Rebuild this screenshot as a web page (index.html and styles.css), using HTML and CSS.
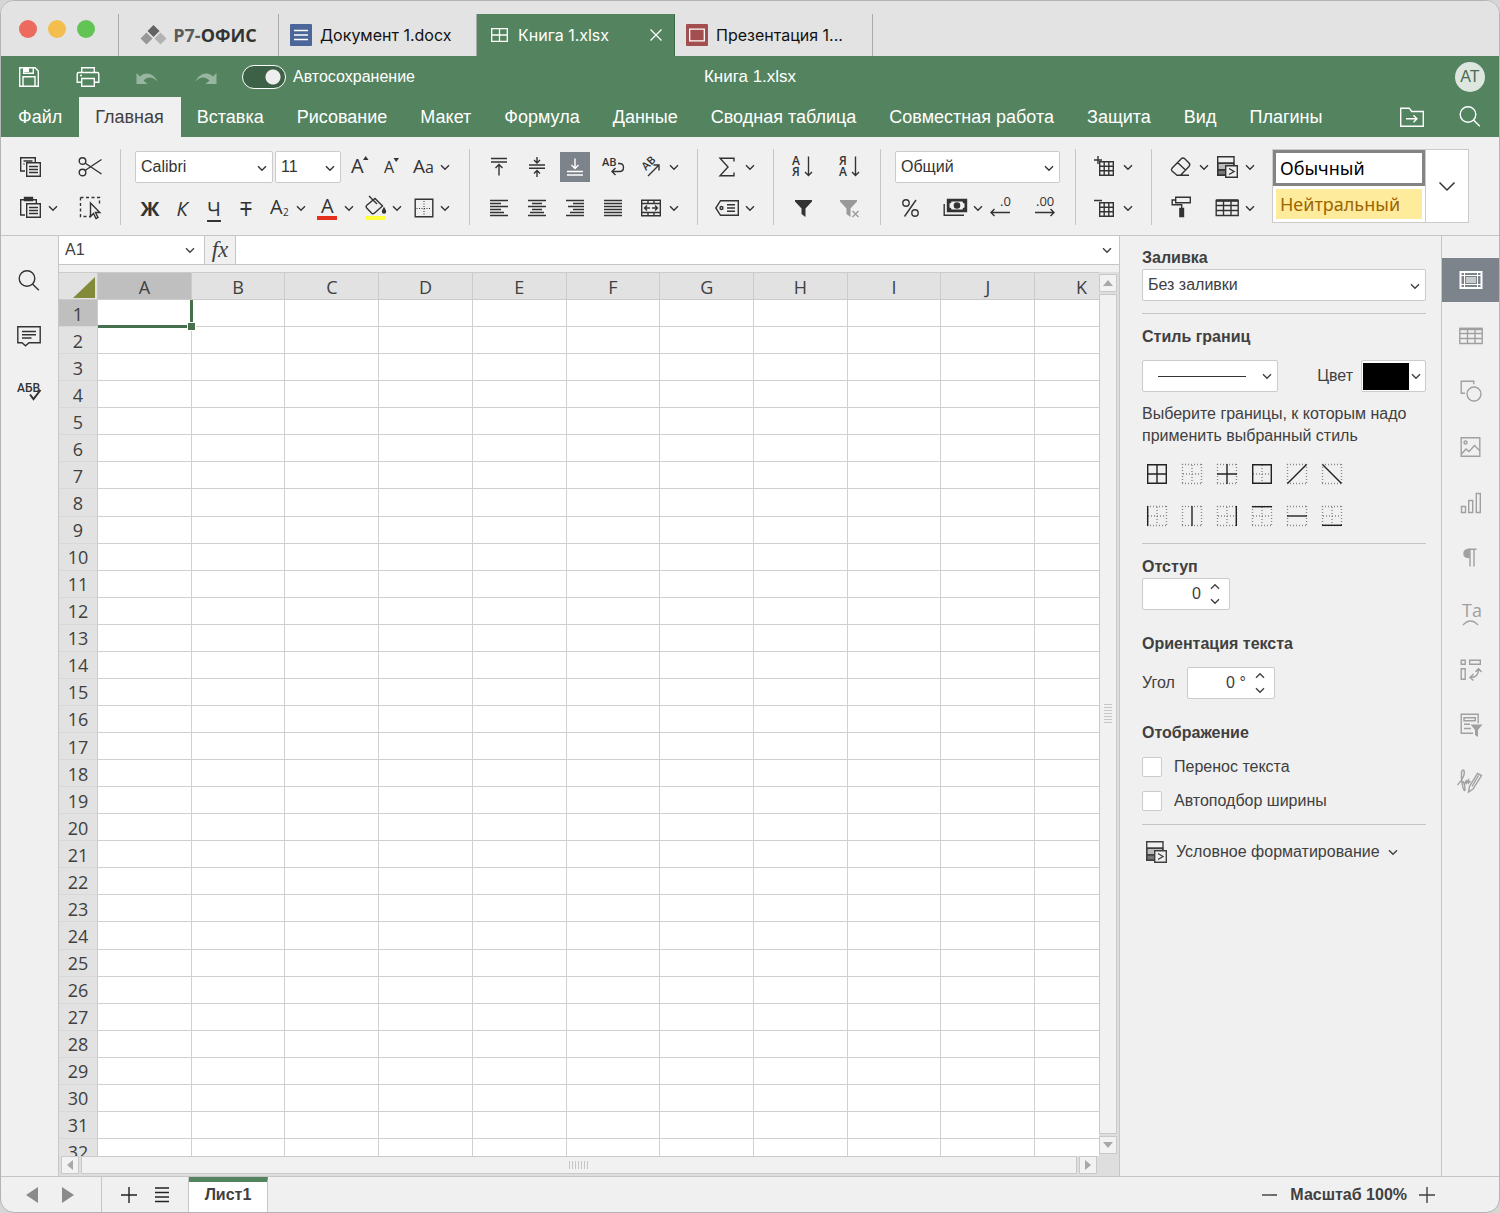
FILE: index.html
```html
<!DOCTYPE html>
<html lang="ru">
<head>
  <meta charset="utf-8">
  <title>Книга 1.xlsx</title>
  <link rel="stylesheet" href="styles.css">
</head>
<body>

<!-- общие иконки -->
<svg class="sprite" aria-hidden="true">
  <symbol id="caret" viewBox="0 0 10 10"><path d="M1 3.2 5 7.2l4-4" fill="none" stroke="currentColor" stroke-width="1.4"/></symbol>
  <symbol id="caret-up" viewBox="0 0 10 10"><path d="M1 6.8 5 2.8l4 4" fill="none" stroke="currentColor" stroke-width="1.4"/></symbol>
  <symbol id="dots" viewBox="0 0 24 24"><path d="M2.5 2v20M21.5 2v20M2 2.5h20M2 21.5h20" fill="none" stroke="#888" stroke-dasharray="1 2"/></symbol>
  <symbol id="dots-cross" viewBox="0 0 24 24"><path d="M12 3v18M3 12h18" fill="none" stroke="#888" stroke-dasharray="1 2"/></symbol>
  <symbol id="cells" viewBox="0 0 24 24"><path d="M6.7 6.7h13.6v13.6H6.7zM11.2 6.7v13.6M15.8 6.7v13.6M6.7 11.2h13.6M6.7 15.8h13.6" fill="none" stroke="currentColor" stroke-width="1.4"/></symbol>
  <symbol id="search" viewBox="0 0 24 24"><circle cx="10" cy="9.500" r="7.800" fill="none" stroke="currentColor" stroke-width="1.4"/><path d="m15.500 15 6.300 6.300" fill="none" stroke="currentColor" stroke-width="1.4"/></symbol>
  <symbol id="cond" viewBox="0 0 24 24"><path d="M2.7 8.300h16v6.500h-16z" fill="#bbb"/><path d="M2.7 14.700h8v5.600h-8z" fill="#777"/><path d="M2.7 1.700H19v18.600H2.700zM2.700 8.300H19M2.700 14.700H12" fill="none" stroke="currentColor" stroke-width="1.4"/><path d="M10.700 10.700h11.600v11.600H10.700z" fill="#f0f0f0" stroke="currentColor" stroke-width="1.4"/><path d="m14 13.500 5 3-5 3" fill="none" stroke="currentColor" stroke-width="1.4"/></symbol>
</svg>

<div class="window">

  <header class="titlebar">
    <div class="lights">
      <span class="light red"></span>
      <span class="light yellow"></span>
      <span class="light green"></span>
    </div>
    <nav class="tabs">
      <a class="tab home" href="#">
        <svg width="27" height="20" viewBox="0 0 27 20"><path d="m13.500 0 6 6-6 6-6-6z" fill="#636363"/><path d="m6.500 7.500 6 6-6 6-6-6z" fill="#979797"/><path d="m20.500 7.500 6 6-6 6-6-6z" fill="#b3b3b3"/></svg>
        <span class="logo"><span>Р7-</span>ОФИС</span>
      </a>
      <a class="tab" href="#">
        <svg width="22" height="22" viewBox="0 0 22 22"><rect width="22" height="22" rx="1" fill="#4b6698"/><path d="M4 6.500h14M4 11h14M4 15.500h14" stroke="#fff" stroke-width="1.5"/></svg>
        <span>Документ 1.docx</span>
      </a>
      <a class="tab active" href="#">
        <svg width="22" height="22" viewBox="0 0 22 22"><path d="M3.700 4.700h15.600v12.600H3.700zM11.500 5v12M4 11h15" fill="none" stroke="#fff" stroke-width="1.3"/></svg>
        <span>Книга 1.xlsx</span>
        <svg class="close" width="14" height="14" viewBox="0 0 14 14"><path d="m1.500 1.500 11 11M12.500 1.500l-11 11" stroke="#fff" stroke-width="1.3"/></svg>
      </a>
      <a class="tab" href="#">
        <svg width="22" height="22" viewBox="0 0 22 22"><rect width="22" height="22" rx="1" fill="#a34f4f"/><path d="M3.700 5.200h14.600v11.600H3.700z" fill="none" stroke="#fff" stroke-width="1.3"/></svg>
        <span>Презентация 1...</span>
      </a>
    </nav>
  </header>

  <div class="header">
    <div class="quick">
      <button class="btn" aria-label="Сохранить"><svg class="icon" viewBox="0 0 24 24"><path d="M2.700 2.700h15.300l3.300 3.300v15.300H2.700z"/><path d="M6 21v-9.300h12V21"/><path d="M6.700 3v5.300h9.600V3"/><path d="M7 3h5v4h-5z" fill="currentColor" stroke="none"/></svg></button>
      <button class="btn" aria-label="Печать"><svg class="icon" viewBox="0 0 24 24"><path d="M5.700 7.500V2.700h12.600v4.800M5.500 17.300H1.200V9q0-1.500 1.500-1.500h18.600q1.500 0 1.500 1.500v8.300h-4.300"/><path d="M5.700 13.500h12.600v7.800H5.700z"/><path d="M4 10.500h2"/></svg></button>
      <button class="btn off" aria-label="Отменить"><svg class="icon" viewBox="0 0 24 24"><path d="M1.500 8v11h11l-4-3.500c4-4 9-4.500 14 1C19.500 9 10.500 5.500 5 11.500z" fill="currentColor" stroke="none"/></svg></button>
      <button class="btn off" aria-label="Повторить"><svg class="icon" viewBox="0 0 24 24"><path d="M22.500 8v11h-11l4-3.500c-4-4-9-4.500-14 1C4.500 9 13.500 5.500 19 11.500z" fill="currentColor" stroke="none"/></svg></button>
      <label class="autosave"><input type="checkbox" class="switch" checked> Автосохранение</label>
    </div>
    <div class="doc-name">Книга 1.xlsx</div>
    <button class="avatar">AT</button>
  </div>

  <nav class="menu">
    <a href="#">Файл</a>
    <a href="#" class="active">Главная</a>
    <a href="#">Вставка</a>
    <a href="#">Рисование</a>
    <a href="#">Макет</a>
    <a href="#">Формула</a>
    <a href="#">Данные</a>
    <a href="#">Сводная таблица</a>
    <a href="#">Совместная работа</a>
    <a href="#">Защита</a>
    <a href="#">Вид</a>
    <a href="#">Плагины</a>
    <div class="menu-tools">
      <button class="btn" aria-label="Открыть расположение"><svg class="icon" viewBox="0 0 24 24"><path d="M.7 21.300V3.200h8.500l2.500 3.300h11.600v14.800z"/><path d="M6 13.800h11M13.500 10.300l3.500 3.500-3.500 3.500"/></svg></button>
      <button class="btn" aria-label="Поиск"><svg class="icon"><use href="#search"/></svg></button>
    </div>
  </nav>

  <div class="toolbar">
    <div class="group">
      <div class="line spread clip">
        <button class="btn" aria-label="Копировать"><svg class="icon" viewBox="0 0 24 24"><path d="M7 16H2.700V2.700h14.600V7M5.500 6h9M5.500 9h1"/><path d="M8.700 7.700h13.600v13.600H8.700zM11 11.500h9M11 14.500h9M11 17.500h9"/></svg></button>
        <button class="btn" aria-label="Вырезать"><svg class="icon" viewBox="0 0 24 24"><circle cx="4.500" cy="6" r="3.300"/><circle cx="4.500" cy="17.500" r="3.300"/><path d="M7 8 23.500 19M7 15.500 23.500 4.500"/></svg></button>
      </div>
      <div class="line spread clip">
        <button class="btn split" aria-label="Вставить"><svg class="icon" viewBox="0 0 24 24"><path d="M7 19H2.700V3.700H6M15 3.700h3.300V7"/><path d="M6.500 1.500h8v3h-8z" fill="currentColor"/><path d="M8.700 7.700h13.600v13.600H8.700zM11 11.500h9M11 14.500h9M11 17.500h9"/></svg><svg class="caret"><use href="#caret"/></svg></button>
        <button class="btn" aria-label="Выделить"><svg class="icon" viewBox="0 0 24 24"><path d="M2.500 1.500h19v7M2.500 1.500v19h10" stroke-dasharray="3 2.500"/><path d="M12.500 7v13.500l3-3 2.500 5 2-1-2.500-5h4.300z" fill="#f0f0f0"/></svg></button>
      </div>
    </div>

    <div class="group font">
      <div class="line tight">
        <span class="combo font-name"><select aria-label="Шрифт"><option>Calibri</option></select><svg class="caret"><use href="#caret"/></svg></span>
        <span class="combo font-size"><select aria-label="Размер шрифта"><option>11</option></select><svg class="caret"><use href="#caret"/></svg></span>
        <button class="btn" aria-label="Увеличить размер"><svg class="icon" viewBox="0 0 24 24"><text x="5" y="18" font-size="20">A</text><path d="m17 5 2.700-4L22.500 5z" fill="currentColor" stroke="none"/></svg></button>
        <button class="btn" aria-label="Уменьшить размер"><svg class="icon" viewBox="0 0 24 24"><text x="6" y="18" font-size="16">A</text><path d="m15.500 3 2.700 4L21 3z" fill="currentColor" stroke="none"/></svg></button>
        <button class="btn split" aria-label="Изменить регистр"><svg class="icon" viewBox="0 0 24 24"><text x="3" y="18" font-size="19">A</text><text x="15" y="18" font-size="16">a</text></svg><svg class="caret"><use href="#caret"/></svg></button>
      </div>
      <div class="line tight">
        <button class="btn letter bold">Ж</button>
        <button class="btn letter italic">К</button>
        <button class="btn letter under">Ч</button>
        <button class="btn letter strike">Т</button>
        <button class="btn split" aria-label="Подстрочные знаки"><svg class="icon" viewBox="0 0 24 24"><text x="4" y="18" font-size="20">A</text><text x="17" y="20" font-size="10">2</text></svg><svg class="caret"><use href="#caret"/></svg></button>
        <button class="btn split" aria-label="Цвет шрифта"><svg class="icon" viewBox="0 0 24 24"><text x="7" y="17" font-size="20">A</text><path d="M3 20h20v4H3z" fill="#e6301e" stroke="none"/></svg><svg class="caret"><use href="#caret"/></svg></button>
        <button class="btn split" aria-label="Цвет заливки"><svg class="icon" viewBox="0 0 24 24"><path d="m4.500 9.500 8.500-7 7.500 7.500-8.500 7.500q-1.200.8-2.300-.3l-5-5.300q-1.200-1.200-.2-2.400zM7 0l8 8"/><path d="M22 12q3 5 0 5t0-5z" fill="currentColor"/><path d="M3 20h20v4H3z" fill="#ffff3c" stroke="none"/></svg><svg class="caret"><use href="#caret"/></svg></button>
        <button class="btn split" aria-label="Границы"><svg class="icon" viewBox="0 0 24 24"><path d="M5.200 3.200h17.600v17.600H5.200z"/><path d="M14 5v15M6.500 12.500h15" stroke-width="1" stroke-dasharray="1 1.500"/></svg><svg class="caret"><use href="#caret"/></svg></button>
      </div>
    </div>

    <div class="group">
      <div class="line wide">
        <button class="btn" aria-label="По верхнему краю"><svg class="icon" viewBox="0 0 24 24"><path d="M4 3.500h16M4 7h16M12 20.500V9.500M8.500 13 12 9.500l3.500 3.500"/></svg></button>
        <button class="btn" aria-label="По середине"><svg class="icon" viewBox="0 0 24 24"><path d="M4 10h16M4 13.300h16M12 2v6M9 5l3 3 3-3M12 22v-6.500M9 18.500l3-3 3 3"/></svg></button>
        <button class="btn pressed" aria-label="По нижнему краю"><svg class="icon" viewBox="0 0 24 24"><path d="M4 16.500h16M4 20h16M12 3.500v10M8.500 10 12 13.500l3.500-3.500"/></svg></button>
        <button class="btn" aria-label="Перенос текста"><svg class="icon" viewBox="0 0 24 24"><text x="1" y="11" font-size="11" font-weight="600">AB</text><path d="M17 8.500h1.500q4 0 4 4t-4 4h-7M14.500 13l-3.500 3.500 3.500 3.500"/></svg></button>
        <button class="btn split" aria-label="Ориентация"><svg class="icon" viewBox="0 0 24 24"><text x="0" y="0" font-size="11" font-weight="600" transform="translate(7 16) rotate(-45)">AB</text><path d="m9 21 11-11M14.500 10H20v5.500"/></svg><svg class="caret"><use href="#caret"/></svg></button>
      </div>
      <div class="line wide">
        <button class="btn" aria-label="По левому краю"><svg class="icon" viewBox="0 0 24 24"><path d="M3 4.500h18M3 7.500h11M3 10.500h18M3 13.500h11M3 16.500h14M3 19.500h18"/></svg></button>
        <button class="btn" aria-label="По центру"><svg class="icon" viewBox="0 0 24 24"><path d="M3 4.500h18M7 7.500h10M3 10.500h18M7 13.500h10M5 16.500h14M3 19.500h18"/></svg></button>
        <button class="btn" aria-label="По правому краю"><svg class="icon" viewBox="0 0 24 24"><path d="M3 4.500h18M10 7.500h11M5 10.500h16M10 13.500h11M7 16.500h14M3 19.500h18"/></svg></button>
        <button class="btn" aria-label="По ширине"><svg class="icon" viewBox="0 0 24 24"><path d="M3 4.500h18M3 7.500h18M3 10.500h18M3 13.500h18M3 16.500h18M3 19.500h18"/></svg></button>
        <button class="btn split" aria-label="Объединить"><svg class="icon" viewBox="0 0 24 24"><path d="M2.700 4.200h18.600v15.600H2.700zM2.700 7.500h18.600M2.700 16.500h18.600M9 4v3.500M15 4v3.500M9 16.500V20M15 16.500V20M5.500 12H11M8 9.500 5.500 12 8 14.500M18.500 12H13M16 9.500l2.500 2.500-2.500 2.500"/></svg><svg class="caret"><use href="#caret"/></svg></button>
      </div>
    </div>

    <div class="group">
      <div class="line">
        <button class="btn split" aria-label="Сумма"><svg class="icon" viewBox="0 0 24 24"><path d="M19 6.500V3.200H5l8 8.800-8 8.800h14v-3.300"/></svg><svg class="caret"><use href="#caret"/></svg></button>
      </div>
      <div class="line">
        <button class="btn split" aria-label="Именованные диапазоны"><svg class="icon" viewBox="0 0 24 24"><path d="M5.500 4.700h17.800v14.600H5.500L.8 12z"/><circle cx="6.500" cy="12" r="1.500"/><path d="M12 8.700h8M12 12h8M12 15.300h8"/></svg><svg class="caret"><use href="#caret"/></svg></button>
      </div>
    </div>

    <div class="group">
      <div class="line sort">
        <button class="btn" aria-label="По возрастанию"><svg class="icon" viewBox="0 0 24 24"><text x="1" y="10" font-size="12" font-weight="600">А</text><text x="1" y="21" font-size="12" font-weight="600">Я</text><path d="M17.500 1.500v19M14 17l3.500 3.500L21 17"/></svg></button>
        <button class="btn" aria-label="По убыванию"><svg class="icon" viewBox="0 0 24 24"><text x="1" y="10" font-size="12" font-weight="600">Я</text><text x="1" y="21" font-size="12" font-weight="600">А</text><path d="M17.500 1.500v19M14 17l3.500 3.500L21 17"/></svg></button>
      </div>
      <div class="line sort">
        <button class="btn" aria-label="Фильтр"><svg class="icon" viewBox="0 0 24 24"><path d="M4 4h17v1.500l-6.500 7V21l-4-3v-5.500L4 5.500z" fill="currentColor" stroke="none"/></svg></button>
        <button class="btn faded" aria-label="Очистить фильтр"><svg class="icon" viewBox="0 0 24 24"><path d="M2 4h17v1.500l-6.500 7V21l-4-3v-5.500L2 5.500z" fill="currentColor" stroke="none"/><path d="m14.500 15 6 6M20.500 15l-6 6"/></svg></button>
      </div>
    </div>

    <div class="group">
      <div class="line">
        <span class="combo format"><select aria-label="Числовой формат"><option>Общий</option></select><svg class="caret"><use href="#caret"/></svg></span>
      </div>
      <div class="line spread">
        <button class="btn" aria-label="Процент"><svg class="icon" viewBox="0 0 24 24"><circle cx="8" cy="7" r="3.200"/><circle cx="17" cy="17" r="3.200"/><path d="M18 4 6.500 20.500"/></svg></button>
        <span class="pair">
          <button class="btn split" aria-label="Денежный формат"><svg class="icon" viewBox="0 0 24 24"><path d="M4.500 3.500h19v12h-19z" fill="currentColor"/><path d="M8.500 5.500h11q0 2 2 2v4q-2 0-2 2h-11q0-2-2-2v-4q2 0 2-2z" fill="#f0f0f0" stroke="none"/><circle cx="14" cy="9.500" r="2.600" fill="currentColor"/><path d="M1.200 8v11.300H21"/></svg><svg class="caret"><use href="#caret"/></svg></button>
          <button class="btn" aria-label="Уменьшить разрядность"><svg class="icon" viewBox="0 0 24 24"><text x="11" y="10" font-size="13">.0</text><path d="M21 16.500H2M5.500 13 2 16.500 5.500 20"/></svg></button>
        </span>
        <button class="btn" aria-label="Увеличить разрядность"><svg class="icon" viewBox="0 0 24 24"><text x="3" y="10" font-size="13">.00</text><path d="M2 16.500h19M17.500 13l3.500 3.500-3.500 3.500"/></svg></button>
      </div>
    </div>

    <div class="group">
      <div class="line">
        <button class="btn split" aria-label="Вставить ячейки"><svg class="icon" viewBox="0 0 24 24"><use href="#cells"/><path d="M5 1v8M1 5h8"/></svg><svg class="caret"><use href="#caret"/></svg></button>
      </div>
      <div class="line">
        <button class="btn split" aria-label="Удалить ячейки"><svg class="icon" viewBox="0 0 24 24"><use href="#cells"/><path d="M1 4.500h8"/></svg><svg class="caret"><use href="#caret"/></svg></button>
      </div>
    </div>

    <div class="group last">
      <div class="line">
        <button class="btn split" aria-label="Очистить"><svg class="icon" viewBox="0 0 24 24"><path d="M8 20.300 3 16q-1.200-1.300 0-2.700L12 4q2-1.800 4 0l4 4q1.500 1.800 0 3.500l-8.500 8.800H8zM8.500 7.500l8.500 8M11 20.300h9"/></svg><svg class="caret"><use href="#caret"/></svg></button>
        <button class="btn split" aria-label="Условное форматирование"><svg class="icon"><use href="#cond"/></svg><svg class="caret"><use href="#caret"/></svg></button>
      </div>
      <div class="line">
        <button class="btn split" aria-label="Формат по образцу"><svg class="icon" viewBox="0 0 24 24"><path d="M6.700 1.200h14.600v5.600H6.700zM6.500 4H3.200v4.700h9.500V12"/><path d="M10.900 12.500h3.600v8h-3.600z" fill="currentColor"/></svg></button>
        <button class="btn split" aria-label="Форматировать как таблицу"><svg class="icon" viewBox="0 0 24 24"><path d="M1.200 4.500h22v15h-22zM1.200 9.500h22M1.200 14.500h22M8.500 5v14.500M16 5v14.500"/><path d="M1.200 4.500h22" stroke-width="2.5"/></svg><svg class="caret"><use href="#caret"/></svg></button>
      </div>
    </div>

    <div class="styles">
      <div class="style-list">
        <button class="style normal">Обычный</button>
        <button class="style neutral">Нейтральный</button>
      </div>
      <button class="style-more" aria-label="Ещё стили"><svg width="18" height="18" viewBox="0 0 18 18"><path d="m1.500 5.500 7.500 7.500 7.500-7.500" fill="none" stroke="currentColor" stroke-width="1.5"/></svg></button>
    </div>
  </div>

  <main class="main">
    <aside class="left">
      <button class="btn" aria-label="Найти"><svg class="icon"><use href="#search"/></svg></button>
      <button class="btn" aria-label="Комментарии"><svg class="icon" viewBox="0 0 24 24"><path d="M.8 2.700h22.400v16.100H12l-3.500 3-3.500-3H.8z"/><path d="M5 7.500h14M5 10.700h14M5 14h9.500"/></svg></button>
      <button class="btn" aria-label="Проверка орфографии"><svg class="icon" viewBox="0 0 24 24"><text class="spell" x="0" y="13" font-size="12">АБВ</text><path d="m13 15.500 3.500 4.500 7-9" stroke-width="2"/></svg></button>
    </aside>

    <section class="editor">
      <div class="formula">
        <span class="cell-name"><input type="text" value="A1" aria-label="Имя ячейки"><svg class="caret"><use href="#caret"/></svg></span>
        <button class="fx">fx</button>
        <span class="cell-value"><input type="text" aria-label="Строка формул"><svg class="caret"><use href="#caret"/></svg></span>
      </div>
      <div class="sheet">
        <div class="sheet-view">
          <table class="grid">
            <thead>
              <tr><th class="corner"><svg width="22" height="21" viewBox="0 0 22 21"><path d="M22 0v21H0z" fill="#838b3a"/></svg></th></tr>
            </thead>
            <tbody></tbody>
          </table>
        </div>
        <div class="vscroll">
          <button class="arrow" aria-label="Вверх"><svg width="10" height="6" viewBox="0 0 10 6"><path d="m5 0 5 6H0z"/></svg></button>
          <div class="thumb"></div>
          <button class="arrow" aria-label="Вниз"><svg width="10" height="6" viewBox="0 0 10 6"><path d="m5 6 5-6H0z"/></svg></button>
        </div>
        <div class="hscroll">
          <button class="arrow" aria-label="Влево"><svg width="6" height="10" viewBox="0 0 6 10"><path d="m0 5 6-5v10z"/></svg></button>
          <div class="thumb"></div>
          <button class="arrow" aria-label="Вправо"><svg width="6" height="10" viewBox="0 0 6 10"><path d="m6 5-6-5v10z"/></svg></button>
        </div>
      </div>
    </section>

    <aside class="panel">
      <label class="title" for="fill">Заливка</label>
      <span class="combo full"><select id="fill"><option>Без заливки</option></select><svg class="caret"><use href="#caret"/></svg></span>
      <hr>
      <h3 class="title">Стиль границ</h3>
      <div class="row border-style">
        <button class="box line-type" aria-label="Тип линии"><span class="sample"></span><svg class="caret"><use href="#caret"/></svg></button>
        <span class="color">
          <span id="color-label">Цвет</span>
          <button class="box swatch" aria-labelledby="color-label"><span class="black"></span><svg class="caret"><use href="#caret"/></svg></button>
        </span>
      </div>
      <p class="hint">Выберите границы, к которым надо применить выбранный стиль</p>
      <div class="borders">
        <button class="btn" aria-label="Все границы"><svg class="icon" viewBox="0 0 24 24"><path d="M2.700 2.700h18.600v18.600H2.700zM12 3v18M3 12h18"/></svg></button>
        <button class="btn" aria-label="Без границ"><svg class="icon" viewBox="0 0 24 24"><use href="#dots"/><use href="#dots-cross"/></svg></button>
        <button class="btn" aria-label="Внутренние"><svg class="icon" viewBox="0 0 24 24"><use href="#dots"/><path d="M12 2v20M2 12h20"/></svg></button>
        <button class="btn" aria-label="Внешние"><svg class="icon" viewBox="0 0 24 24"><use href="#dots-cross"/><path d="M2.700 2.700h18.600v18.600H2.700z"/></svg></button>
        <button class="btn" aria-label="Диагональ вверх"><svg class="icon" viewBox="0 0 24 24"><use href="#dots"/><path d="M2.500 21.500l19-19"/></svg></button>
        <button class="btn" aria-label="Диагональ вниз"><svg class="icon" viewBox="0 0 24 24"><use href="#dots"/><path d="M2.500 2.500l19 19"/></svg></button>
        <button class="btn" aria-label="Левая"><svg class="icon" viewBox="0 0 24 24"><use href="#dots"/><use href="#dots-cross"/><path d="M2.700 2v20"/></svg></button>
        <button class="btn" aria-label="Внутренняя вертикальная"><svg class="icon" viewBox="0 0 24 24"><use href="#dots"/><path d="M12 2v20"/></svg></button>
        <button class="btn" aria-label="Правая"><svg class="icon" viewBox="0 0 24 24"><use href="#dots"/><use href="#dots-cross"/><path d="M21.300 2v20"/></svg></button>
        <button class="btn" aria-label="Верхняя"><svg class="icon" viewBox="0 0 24 24"><use href="#dots"/><use href="#dots-cross"/><path d="M2 2.700h20"/></svg></button>
        <button class="btn" aria-label="Внутренняя горизонтальная"><svg class="icon" viewBox="0 0 24 24"><use href="#dots"/><path d="M2 12h20"/></svg></button>
        <button class="btn" aria-label="Нижняя"><svg class="icon" viewBox="0 0 24 24"><use href="#dots"/><use href="#dots-cross"/><path d="M2 21.300h20"/></svg></button>
      </div>
      <hr>
      <label class="title" for="indent">Отступ</label>
      <div class="spin">
        <input type="text" id="indent" value="0">
        <span class="steps"><button aria-label="Больше"><svg class="caret"><use href="#caret-up"/></svg></button><button aria-label="Меньше"><svg class="caret"><use href="#caret"/></svg></button></span>
      </div>
      <h3 class="title orient">Ориентация текста</h3>
      <div class="row angle">
        <label for="angle">Угол</label>
        <div class="spin">
          <input type="text" id="angle" value="0 °">
          <span class="steps"><button aria-label="Больше"><svg class="caret"><use href="#caret-up"/></svg></button><button aria-label="Меньше"><svg class="caret"><use href="#caret"/></svg></button></span>
        </div>
      </div>
      <h3 class="title display">Отображение</h3>
      <label class="check"><input type="checkbox"> Перенос текста</label>
      <label class="check"><input type="checkbox"> Автоподбор ширины</label>
      <hr>
      <button class="cond"><svg class="icon"><use href="#cond"/></svg> Условное форматирование <svg class="caret"><use href="#caret"/></svg></button>
    </aside>

    <aside class="right">
      <button class="side active" aria-label="Параметры ячейки"><svg class="icon" viewBox="0 0 24 24"><path d="M1.500 4h21v16h-21z" stroke-width="2"/><path d="M5.500 4v16M18.500 4v16M2 7.500h20M2 16.500h20" stroke-width="1"/><path d="M7 9h10v6H7z" fill="#c8cbce" stroke="none"/></svg></button>
      <button class="side" aria-label="Параметры таблицы"><svg class="icon" viewBox="0 0 24 24"><path d="M.8 4.500h22.400v15H.8zM.8 9.500h22.400M.8 14.500h22.400M8.500 5v14.500M16 5v14.500"/><path d="M.8 5h22.400" stroke-width="2.5"/></svg></button>
      <button class="side" aria-label="Параметры фигуры"><svg class="icon" viewBox="0 0 24 24"><path d="M6 14.300H2.200V2.200h12.600v3"/><circle cx="15" cy="15" r="7"/></svg></button>
      <button class="side" aria-label="Параметры изображения"><svg class="icon" viewBox="0 0 24 24"><path d="M2.200 2.700h18.600v18.600H2.200zM2.500 19l4.500-5 3 2.500 5.500-6 5 5"/><circle cx="6.500" cy="7.500" r="1.500"/></svg></button>
      <button class="side" aria-label="Параметры диаграммы"><svg class="icon" viewBox="0 0 24 24"><path d="M2.500 15.500h4v6h-4zM9.700 9.500h4v12h-4zM17.300 2.500h4v19h-4z"/></svg></button>
      <button class="side" aria-label="Параметры абзаца"><svg class="icon" viewBox="0 0 24 24"><path d="M10 3.500q-5 0-5 4t5 4z" fill="currentColor"/><path d="M9 3.300h8.500M11 3v17.500M15 3v17.500"/></svg></button>
      <button class="side" aria-label="Параметры Text Art"><svg class="icon" viewBox="0 0 24 24"><text x="3" y="15" font-size="18">Ta</text><path d="M4 23q7.500-8 15 0"/></svg></button>
      <button class="side" aria-label="Сводная таблица"><svg class="icon" viewBox="0 0 24 24"><path d="M2.200 2.200h4v4h-4zM10.700 2.200h10.600v4H10.700zM2.200 10.700h4v10.600h-4zM11.500 19.500q8 0 8-8M14.500 16l-3.500 3.500 3.500 3M16.500 14l3-3.500 3 3.500"/></svg></button>
      <button class="side" aria-label="Параметры среза"><svg class="icon" viewBox="0 0 24 24"><path d="M14 20.300H2.200V1.200h17v9M5 4.700h11.300v3H5zM5 11.300h6M5 15.500h7"/><path d="M11.500 11.500h12l-4.500 5.500v7l-3-2v-5z" fill="currentColor" stroke="none"/></svg></button>
      <button class="side" aria-label="Подпись"><svg class="icon" viewBox="0 0 24 24"><path d="M-1.500 16q5-5 6.500-10 .8-5-1-5-2 0-1.500 8 .5 8 2.500 12 1 1.500 1-1-.5-8-3-7.500M5.500 15l2-4v3l2-3v3l2-2"/><path d="m9.500 23 1-5.500L18.500 4.500l4 2-8.500 13.500zM13 17.500l6.500-11"/></svg></button>
    </aside>
  </main>

  <footer class="status">
    <div class="sheet-nav">
      <button class="nav-arrow" aria-label="Предыдущий лист"><svg width="12" height="16" viewBox="0 0 12 16"><path d="M0 8 12 0v16z"/></svg></button>
      <button class="nav-arrow" aria-label="Следующий лист"><svg width="12" height="16" viewBox="0 0 12 16"><path d="M12 8 0 0v16z"/></svg></button>
    </div>
    <div class="sheet-add">
      <button class="btn" aria-label="Добавить лист"><svg class="icon" viewBox="0 0 24 24"><path d="M12 4v16M4 12h16"/></svg></button>
      <button class="btn" aria-label="Список листов"><svg class="icon" viewBox="0 0 24 24"><path d="M5 5h14M5 9.500h14M5 14h14M5 18.500h14"/></svg></button>
    </div>
    <button class="sheet-tab">Лист1</button>
    <div class="zoom">
      <button class="btn" aria-label="Мельче"><svg class="icon" viewBox="0 0 24 24"><path d="M4 12h15"/></svg></button>
      <span>Масштаб 100%</span>
      <button class="btn" aria-label="Крупнее"><svg class="icon" viewBox="0 0 24 24"><path d="M12 4v16M4 12h16"/></svg></button>
    </div>
  </footer>
</div>

<script src="script.js"></script>
</body>
</html>
```

FILE: styles.css
```css
* {
  box-sizing: border-box;
  margin: 0;
  padding: 0;
}

body {
  background: #d6d6d6;
  font: 16px/22px "Liberation Sans", sans-serif;
  color: #404040;
}

button, input, select {
  font: inherit;
  color: inherit;
  background: none;
  border: none;
  outline: none;
}

a {
  color: inherit;
  text-decoration: none;
}

.sprite {
  display: none;
}

.window {
  display: flex;
  flex-direction: column;
  height: 100vh;
  border: 1px solid #b4b4b4;
  border-radius: 14px;
  background: #f0f0f0;
  overflow: hidden;
}

/* иконки и кнопки */
.icon {
  flex: none;
  width: 24px;
  height: 24px;
  overflow: visible;
  fill: none;
  stroke: currentColor;
  stroke-width: 1.4;
}

.icon text {
  fill: currentColor;
  stroke: none;
  font-family: "Open Sans", sans-serif;
}

.icon .spell {
  font-family: Roboto, sans-serif;
  font-weight: 500;
}

.caret {
  flex: none;
  width: 10px;
  height: 10px;
}

.btn {
  flex: none;
  display: flex;
  align-items: center;
  justify-content: center;
  width: 30px;
  height: 30px;
}

.split {
  justify-content: flex-start;
  gap: 6px;
  width: 46px;
  padding-left: 3px;
}

/* заголовок окна */
.titlebar {
  display: flex;
  flex: none;
  align-items: flex-end;
  height: 55px;
  background: #e3e3e3;
}

.lights {
  display: flex;
  align-self: stretch;
  align-items: center;
  gap: 11px;
  width: 117px;
  padding-left: 18px;
}

.light {
  width: 18px;
  height: 18px;
  border-radius: 50%;
}

.red { background: #ec6a5e; }
.yellow { background: #f4be4f; }
.green { background: #61c454; }

.tabs {
  display: flex;
  border-left: 1px solid #ababab;
}

.tab {
  display: flex;
  align-items: center;
  gap: 8px;
  width: 198px;
  height: 42px;
  padding: 0 11px;
  border-right: 1px solid #ababab;
  font-family: Inter, sans-serif;
  color: #111;
}

.tab.home {
  justify-content: center;
  width: 160px;
  gap: 6px;
}

.tab.active {
  background: #54845f;
  border-color: #3d6847;
  color: #fff;
}

.close {
  margin-left: auto;
}

.logo {
  font: bold 18px "Open Sans", sans-serif;
  color: #333;
}

.logo span {
  color: #5c5c5c;
}

/* зелёная шапка */
.header {
  position: relative;
  display: flex;
  flex: none;
  align-items: center;
  justify-content: space-between;
  height: 41px;
  padding-right: 14px;
  background: #54845f;
  color: #fff;
}

.quick {
  display: flex;
  align-items: center;
  gap: 29px;
  padding-left: 13px;
}

.off {
  opacity: .4;
}

.autosave {
  display: flex;
  align-items: center;
  gap: 7px;
  margin-left: -8px;
}

.switch {
  appearance: none;
  width: 44px;
  height: 24px;
  border: 1px solid #fff;
  border-radius: 12px;
  background: radial-gradient(circle at 30px 11px, #eee 7px, #3d6147 8px);
}

.doc-name {
  position: absolute;
  left: 0;
  right: 0;
  font-size: 17px;
  text-align: center;
  pointer-events: none;
}

.avatar {
  width: 30px;
  height: 30px;
  border-radius: 50%;
  background: #dde6df;
  color: #4a6b52;
}

.menu {
  display: flex;
  flex: none;
  height: 40px;
  padding-left: 1px;
  background: #54845f;
  color: #fff;
  font-size: 18px;
}

.menu a {
  padding: 0 17px 0 16px;
  line-height: 41px;
}

.menu .active {
  background: #f0f0f0;
  color: #404040;
}

.menu-tools {
  display: flex;
  align-items: center;
  gap: 28px;
  margin-left: auto;
  padding-right: 14px;
}

/* панель инструментов */
.toolbar {
  display: flex;
  flex: none;
  height: 99px;
  padding: 10px 0 7px;
  border-bottom: 1px solid #c6c6c6;
  color: #333;
}

.group {
  display: grid;
  grid-template-rows: 40px 40px;
  gap: 1px;
  height: 76px;
  margin-top: 2px;
  padding: 0 15px 0 14px;
  border-right: 1px solid #c6c6c6;
}

.group.font {
  padding-right: 16px;
}

.group.last {
  padding-right: 14px;
  border-right: none;
}

.line {
  display: flex;
  align-items: center;
  height: 36px;
}

.tight { gap: 2px; }
.wide { gap: 8px; }
.sort { gap: 17px; }
.spread { justify-content: space-between; }
.clip { width: 90px; }
.pair { display: flex; }

.pressed {
  background: #7d838b;
  color: #fff;
}

.faded {
  color: #999;
}

.letter {
  font: 20px "Open Sans", sans-serif;
}

.bold { font-weight: 700; }
.italic { font-style: italic; }
.under { text-decoration: underline; text-underline-offset: 4px; }
.strike { text-decoration: line-through; }

.combo {
  position: relative;
  display: block;
}

.combo select {
  appearance: none;
  width: 100%;
  height: 32px;
  padding: 0 5px;
  border: 1px solid #cbcbcb;
  border-radius: 2px;
  background: #fff;
}

.combo .caret {
  position: absolute;
  right: 6px;
  top: 12px;
}

.font-name { width: 138px; }
.font-size { width: 66px; }
.format { width: 165px; }

.styles {
  display: flex;
  width: 197px;
  height: 74px;
  margin-top: 2px;
  border: 1px solid #cbcbcb;
  background: #fff;
}

.style-list {
  display: flex;
  flex-direction: column;
  flex: 1;
  border-right: 1px solid #cbcbcb;
}

.style {
  height: 36px;
  padding-left: 4px;
  border: 3px solid #848484;
  font: 18px "Noto Sans", sans-serif;
  text-align: left;
  color: #000;
}

.neutral {
  border-color: #fff;
  background: #ffeb9c;
  color: #9c6500;
}

.style-more {
  display: flex;
  align-items: center;
  justify-content: center;
  width: 42px;
}

/* рабочая область */
.main {
  display: flex;
  flex: 1;
  min-height: 0;
}

.left {
  display: flex;
  flex: none;
  flex-direction: column;
  align-items: center;
  gap: 25px;
  width: 58px;
  padding: 30px 1px 0 0;
  border-right: 1px solid #c6c6c6;
  color: #333;
}

.editor {
  display: flex;
  flex: 1;
  flex-direction: column;
  min-width: 0;
  border-right: 1px solid #c6c6c6;
}

.formula {
  display: flex;
  flex: none;
  height: 29px;
  border-bottom: 1px solid #c6c6c6;
}

.cell-name, .cell-value {
  display: flex;
  align-items: center;
  padding: 0 9px 0 6px;
  background: #fff;
}

.cell-name {
  width: 146px;
  border-right: 1px solid #c6c6c6;
}

.cell-name input, .cell-value input {
  flex: 1;
  min-width: 0;
}

.cell-value {
  flex: 1;
  padding-right: 7px;
}

.fx {
  width: 31px;
  border-right: 1px solid #c6c6c6;
  font: italic 23px/26px "Liberation Serif", serif;
}

.sheet {
  display: grid;
  flex: 1;
  grid-template: 1fr 20px / 1fr 20px;
  min-height: 0;
  padding-top: 7px;
}

.sheet-view {
  overflow: hidden;
  background: #fff;
}

.grid {
  width: 1070px;
  height: 894px;
  table-layout: fixed;
  border-collapse: separate;
  border-spacing: 0;
  font: 18px/20px "Open Sans", sans-serif;
}

.grid th {
  padding-top: 1px;
  border-right: 1px solid #cbcbcb;
  border-bottom: 1px solid #cbcbcb;
  background: #e2e2e2;
  font-weight: normal;
}

.grid tbody th {
  border-bottom-color: #d8d8d8;
}

.grid thead th {
  height: 28px;
  border-top: 1px solid #cbcbcb;
}

.grid td {
  position: relative;
  height: 27px;
  border-right: 1px solid #d0d0d0;
  border-bottom: 1px solid #d0d0d0;
}

.grid .corner {
  width: 39px;
  padding: 3px 2px 0 0;
  text-align: right;
}

.corner svg {
  display: block;
  margin-left: auto;
}

.grid .current {
  background: #bfbfbf;
}

/* рамка выделения лежит поверх линий сетки */
.selected::after {
  content: "";
  position: absolute;
  inset: 0 -2px -2px 0;
  border: solid #47704f;
  border-width: 0 3px 3px 0;
}

.handle {
  position: absolute;
  right: -5px;
  bottom: -5px;
  z-index: 1;
  width: 9px;
  height: 9px;
  border: 1px solid #fff;
  background: #47704f;
}

.vscroll, .hscroll {
  display: flex;
  gap: 2px;
  background: #dedede;
}

.vscroll {
  flex-direction: column;
  padding: 2px 2px 2px 0;
}

.hscroll {
  grid-column: 1 / -1;
  padding: 0 22px 2px 2px;
}

.arrow {
  display: flex;
  flex: none;
  align-items: center;
  justify-content: center;
  width: 18px;
  height: 18px;
  border: 1px solid #c9c9c9;
  background: #f2f2f2;
  fill: #a8a8a8;
}

.thumb {
  display: flex;
  flex: 1;
  align-items: center;
  justify-content: center;
  border: 1px solid #c9c9c9;
  background: #f1f1f1;
}

.thumb::before {
  content: "";
}

.vscroll .thumb::before {
  width: 8px;
  height: 20px;
  background: repeating-linear-gradient(#c6c6c6 0 1px, #f1f1f1 1px 3px);
}

.hscroll .thumb::before {
  width: 20px;
  height: 8px;
  background: repeating-linear-gradient(90deg, #c6c6c6 0 1px, #f1f1f1 1px 3px);
}

/* параметры ячейки */
.panel {
  flex: none;
  width: 322px;
  padding: 11px 15px 0 22px;
  border-right: 1px solid #c6c6c6;
}

.panel hr {
  height: 1px;
  margin: 12px 0;
  border: none;
  background: #c6c6c6;
}

.title {
  display: block;
  font-size: 16px;
  font-weight: bold;
}

.row {
  display: flex;
  align-items: center;
}

.border-style {
  justify-content: space-between;
  margin: 12px 0 11px;
}

.box {
  display: flex;
  align-items: center;
  justify-content: space-between;
  height: 32px;
  border: 1px solid #cbcbcb;
  border-radius: 2px;
  background: #fff;
}

.line-type {
  width: 136px;
  padding: 0 5px 0 15px;
}

.sample {
  width: 88px;
  height: 1px;
  background: #333;
}

.color {
  display: flex;
  align-items: center;
  gap: 8px;
}

.swatch {
  width: 65px;
  padding: 0 4px 0 1px;
}

.black {
  width: 46px;
  height: 27px;
  background: #000;
}

.borders {
  display: grid;
  grid-template-columns: repeat(6, 30px);
  gap: 12px 5px;
  margin: 12px 0;
  color: #222;
}

.spin {
  display: flex;
  width: 88px;
  height: 32px;
  border: 1px solid #cbcbcb;
  border-radius: 2px;
  background: #fff;
}

.spin input {
  flex: 1;
  min-width: 0;
  text-align: right;
}

.steps {
  display: flex;
  flex-direction: column;
  justify-content: space-evenly;
  width: 28px;
}

.steps button {
  display: flex;
  justify-content: center;
}

.orient, .display {
  margin-top: 23px;
}

.angle {
  gap: 12px;
  margin-top: 12px;
}

.check {
  display: flex;
  align-items: center;
  gap: 12px;
  margin-top: 12px;
}

.check input {
  appearance: none;
  width: 20px;
  height: 20px;
  border: 1px solid #cbcbcb;
  border-radius: 2px;
  background: #fff;
}

.cond {
  display: flex;
  align-items: center;
  gap: 8px;
  height: 30px;
  padding-left: 2px;
}

/* правая полоса */
.right {
  display: flex;
  flex: none;
  flex-direction: column;
  justify-content: space-between;
  width: 57px;
  height: 567px;
  padding-top: 22px;
}

.side {
  display: flex;
  flex: none;
  align-items: center;
  justify-content: center;
  height: 44px;
  color: #a0a0a0;
}

.side.active {
  background: #7d838b;
  color: #fff;
}

/* строка состояния */
.status {
  display: flex;
  flex: none;
  height: 36px;
  border-top: 1px solid #c6c6c6;
  font-weight: bold;
}

.sheet-nav, .sheet-add {
  display: flex;
  align-items: center;
  border-right: 1px solid #c6c6c6;
}

.sheet-nav {
  gap: 24px;
  width: 101px;
  padding-left: 25px;
}

.nav-arrow {
  display: flex;
  fill: #8a8a8a;
}

.sheet-add {
  gap: 3px;
  width: 87px;
  padding-left: 12px;
  color: #222;
}

.sheet-tab {
  width: 79px;
  padding-bottom: 4px;
  border-top: 5px solid #54845f;
  border-right: 1px solid #c6c6c6;
  background: #fff;
  font-weight: bold;
}

.zoom {
  display: flex;
  align-items: center;
  gap: 5px;
  margin-left: auto;
  padding-right: 57px;
}
```

FILE: script.js
```js
// строим сетку листа
;(function() {
  let letters = "ABCDEFGHIJK"
  let headRow = document.querySelector(".grid thead tr")
  let body = document.querySelector(".grid tbody")

  for(let i = 0; i < letters.length; i++) {
    let th = document.createElement("th")
    th.textContent = letters[i]
    if(i === 0) th.className = "current"
    headRow.appendChild(th)
  }

  for(let r = 1; r <= 32; r++) {
    let tr = document.createElement("tr")
    let th = document.createElement("th")
    th.textContent = r
    if(r === 1) th.className = "current"
    tr.appendChild(th)
    for(let c = 0; c < letters.length; c++) {
      let td = document.createElement("td")
      // активная ячейка A1
      if(r === 1 && c === 0) {
        td.className = "selected"
        td.innerHTML = "<span class='handle'></span>"
      }
      tr.appendChild(td)
    }
    body.appendChild(tr)
  }
})()
```
